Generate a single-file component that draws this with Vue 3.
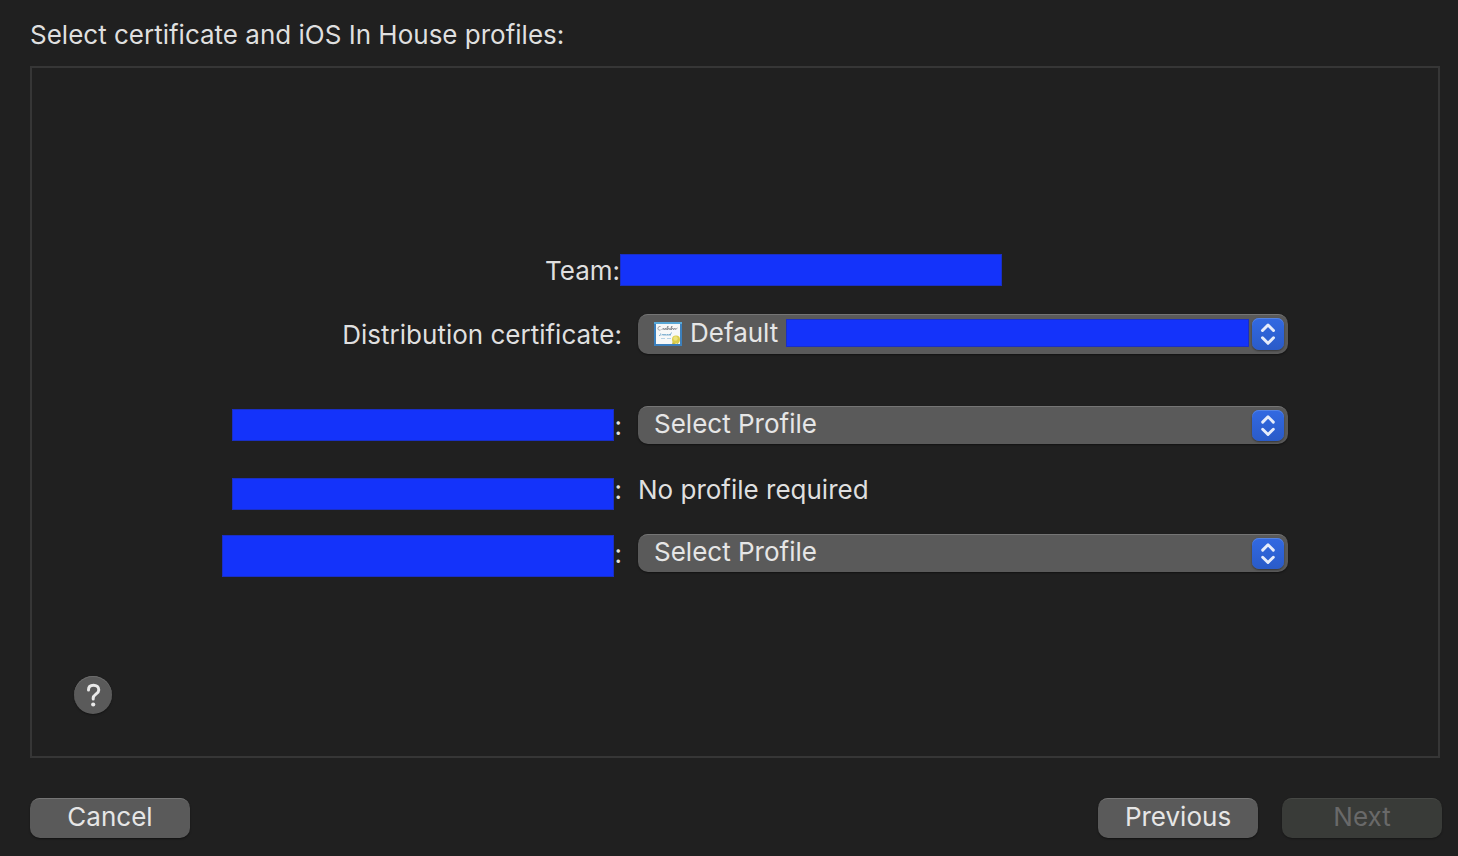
<template>
  <main class="sheet">
    <h1 class="sheet-title">Select certificate and iOS In House profiles:</h1>

    <section class="panel">
      <div class="form-grid">
        <div class="row row-team">
          <div class="label">Team:</div>
          <div class="value"><span class="redacted redacted-team"></span></div>
        </div>

        <div class="row row-cert">
          <label class="label" for="certificate">Distribution certificate:</label>
          <div class="popup">
            <select id="certificate" v-model="certificate" class="popup-select with-icon">
              <option value="default">Default</option>
            </select>
            <svg class="cert-icon" viewBox="0 0 28 24" aria-hidden="true">
              <rect x="1" y="1" width="26" height="22" fill="#f7f8f8" stroke="#3c80bd" stroke-width="2" />
              <path d="M0 1H28" stroke="#5aa9d8" stroke-width="2" />
              <path
                d="M6.500 4.500c-3.500-.5-3.500 4.500 0 3.500M7.500 8l2-2 .5 2 1.500-2 .5 2 2-4-.5 4 1.500-2 1 2 2-4-1 4 2-2 .5 2 1.500-2 .5 1.500 2-1.500"
                fill="none"
                stroke="#73777c"
                stroke-width=".7"
              />
              <path
                d="M5 13.500c3 0 1-2 2-2M8 13.500l1-1.500 1 1.500 1-1.500 1 1.500 1.500-1.500.5 1.500 1.500-1.500.5 1.500 1.500-3"
                fill="none"
                stroke="#5c9bc4"
                stroke-width=".8"
              />
              <path d="M7 16.500h4M13 16.500h4" stroke="#a5c8de" stroke-width=".8" />
              <path d="M19 19l-1 3h3l1-1 2 1 1-3z" fill="#c9b93a" />
              <circle cx="22" cy="17.500" r="4" fill="#dccd4c" />
              <circle cx="21.500" cy="16.500" r="2.200" fill="#ece27a" />
            </svg>
            <span class="redacted redacted-cert"></span>
            <span class="stepper">
              <svg viewBox="0 0 32 32" aria-hidden="true">
                <path d="M10.500 12.500L16 7L21.500 12.500M10.500 19.800L16 25.300L21.500 19.800" />
              </svg>
            </span>
          </div>
        </div>

        <div v-for="target in targets" :key="target.id" class="row" :class="'row-' + target.id">
          <component
            :is="target.required ? 'label' : 'div'"
            class="label"
            :for="target.required ? target.id : undefined"
          >
            <span class="redacted redacted-name"></span>
            <span class="colon">:</span>
          </component>
          <div v-if="target.required" class="popup popup-small">
            <select :id="target.id" v-model="target.profile" class="popup-select">
              <option value="">Select Profile</option>
            </select>
            <span class="stepper">
              <svg viewBox="0 0 32 32" aria-hidden="true">
                <path d="M10.500 12.500L16 7L21.500 12.500M10.500 19.800L16 25.300L21.500 19.800" />
              </svg>
            </span>
          </div>
          <div v-else class="value">No profile required</div>
        </div>
      </div>

      <button class="help" type="button" aria-label="Help">
        <svg viewBox="0 0 38 38" aria-hidden="true">
          <path d="M14.500 14c0-3 2-4.800 5-4.800s5.300 1.800 5.300 4.700c0 4.100-5.600 4.300-5.600 8.100v1" />
          <circle cx="19.200" cy="28.500" r="2.100" />
        </svg>
      </button>
    </section>

    <footer class="actions">
      <button class="btn" type="button">Cancel</button>
      <div class="actions-right">
        <button class="btn" type="button">Previous</button>
        <button class="btn" type="button" :disabled="!canContinue">Next</button>
      </div>
    </footer>
  </main>
</template>

<script setup>
import { computed, ref } from 'vue'

const certificate = ref('default')
const targets = ref([
  { id: 'app', required: true, profile: '' },
  { id: 'framework', required: false, profile: '' },
  { id: 'extension', required: true, profile: '' },
])

const canContinue = computed(() => targets.value.every(target => !target.required || target.profile))
</script>

<style>
body {
  margin: 0;
  background: #202020;
}
</style>

<style scoped>
.sheet {
  box-sizing: border-box;
  min-height: 100vh;
  padding: 19px 16px 18px 30px;
  display: flex;
  flex-direction: column;
  background: #202020;
  color: #dfdfdf;
  font-family: Inter, "Liberation Sans", sans-serif;
  font-size: 26px;
  line-height: 32px;
}

.sheet-title {
  margin: 0 0 15px;
  font-size: 26px;
  font-weight: 400;
}

.panel {
  flex: 1;
  display: flex;
  flex-direction: column;
  margin-right: 2px;
  padding: 185px 150px 42px 40px;
  border: 2px solid #363636;
}

.form-grid {
  display: flex;
  flex-direction: column;
  margin-bottom: 24px;
}

.row {
  display: grid;
  grid-template-columns: 11fr 13fr;
  column-gap: 16px;
  align-items: center;
}

.row-team .label {
  padding: 2px 2px 0 0;
}

.row-cert {
  margin-top: 27px;
}

.row-cert .label {
  padding-top: 2px;
}

.row-app {
  margin-top: 52px;
}

.row-framework {
  margin-top: 30px;
  align-items: start;
}

.row-extension {
  margin-top: 24px;
  align-items: start;
}

.label {
  display: flex;
  justify-content: flex-end;
  align-items: center;
  text-align: right;
}

.colon {
  width: 8px;
}

.redacted {
  display: block;
  box-sizing: border-box;
  height: 32px;
  background: #1433fa;
  border: 1px solid #1a2fc4;
}

/* the team name starts right after its label */
.redacted-team {
  width: 382px;
  margin-left: -18px;
}

.redacted-name {
  width: 382px;
}

.row-app .colon {
  margin-top: 2px;
}

.row-framework .label,
.row-extension .label {
  align-items: flex-start;
}

.row-framework .redacted-name {
  margin-top: 4px;
}

.row-extension .redacted-name {
  width: 392px;
  height: 42px;
  margin-top: 1px;
}

.row-extension .colon {
  margin-top: 4px;
}

.popup {
  position: relative;
  height: 40px;
}

.popup-small {
  height: 38px;
}

.popup-select {
  appearance: none;
  display: block;
  width: 100%;
  height: 100%;
  margin: 0;
  padding: 0 48px 2px 16px;
  border: 0;
  border-radius: 10px;
  background: #5a5a5a;
  box-shadow: inset 0 2px 0 -1px #757575, 0 1px 2px rgba(0, 0, 0, 0.45);
  color: #e6e6e6;
  font: inherit;
}

.with-icon {
  padding-left: 52px;
}

.cert-icon {
  position: absolute;
  left: 16px;
  top: 8px;
  width: 28px;
  height: 24px;
  pointer-events: none;
}

.redacted-cert {
  position: absolute;
  left: 148px;
  right: 39px;
  top: 5px;
  height: 28px;
}

.stepper {
  position: absolute;
  right: 4px;
  top: 4px;
  bottom: 4px;
  width: 32px;
  border-radius: 7px;
  background: linear-gradient(#3269e2, #2a5bc8);
  box-shadow: inset 0 1px 0 #5483e4, 0 1px 2px rgba(0, 0, 0, 0.4);
  pointer-events: none;
}

.popup-small .stepper {
  bottom: 3px;
}

.stepper svg {
  display: block;
  width: 100%;
  height: 100%;
  fill: none;
  stroke: #e6ecfa;
  stroke-width: 3;
  stroke-linecap: round;
  stroke-linejoin: round;
}

.help {
  width: 38px;
  height: 38px;
  margin: auto 0 0 2px;
  padding: 0;
  border: 0;
  border-radius: 50%;
  background: #5a5a5a;
  box-shadow: inset 0 1px 0 #6c6c6c, 0 1px 2px rgba(0, 0, 0, 0.4);
}

.help svg {
  display: block;
  width: 100%;
  height: 100%;
}

.help path {
  fill: none;
  stroke: #e9e9e9;
  stroke-width: 3;
  stroke-linecap: round;
}

.help circle {
  fill: #e9e9e9;
}

.actions {
  display: flex;
  justify-content: space-between;
  margin-top: 40px;
}

.actions-right {
  display: flex;
  gap: 24px;
}

.btn {
  width: 160px;
  height: 40px;
  padding: 0 0 2px;
  border: 0;
  border-radius: 10px;
  background: #5a5a5a;
  box-shadow: inset 0 2px 0 -1px #757575, 0 1px 2px rgba(0, 0, 0, 0.45);
  color: #e6e6e6;
  font: inherit;
}

.btn:disabled {
  background: #393b38;
  box-shadow: inset 0 2px 0 -1px #464845, 0 1px 2px rgba(0, 0, 0, 0.3);
  color: #696969;
}
</style>
